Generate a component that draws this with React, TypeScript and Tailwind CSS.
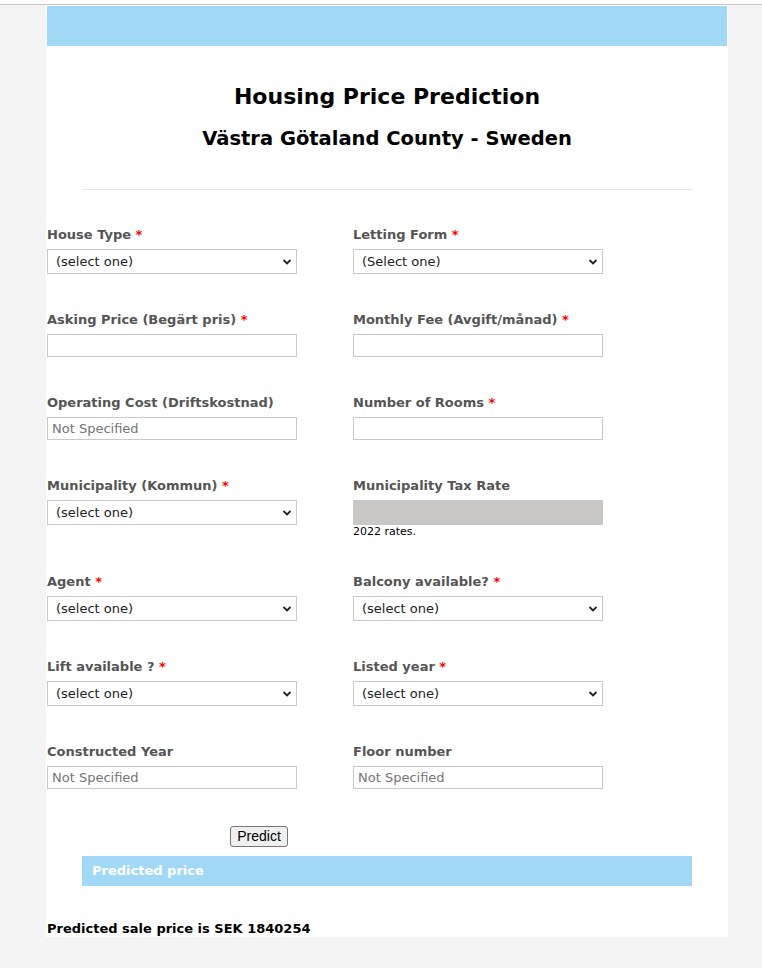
import React from "react";

const font = { fontFamily: '"DejaVu Sans", Verdana, sans-serif' };

function Label({ text, req }: { text: string; req?: boolean }) {
  return (
    <div className="h-[16px] leading-[16px] text-[13px] font-bold text-[#555555] mb-[6px] whitespace-nowrap">
      {text}
      {req && <span className="text-[#ff0000]"> *</span>}
    </div>
  );
}

function Select({ value }: { value: string }) {
  return (
    <div className="relative w-[250px] h-[25px] border border-[#c8c8c8] bg-white flex items-center pl-[8px] text-[13px] text-[#222222]">
      <span>{value}</span>
      <svg
        className="absolute right-[4px] top-[8px]"
        width="10"
        height="8"
        viewBox="0 0 10 8"
      >
        <path d="M1.5 2 L5 5.5 L8.5 2" fill="none" stroke="#222" strokeWidth="1.8" />
      </svg>
    </div>
  );
}

function Input({ placeholder }: { placeholder?: string }) {
  return (
    <div className="w-[250px] h-[23px] border border-[#c8c8c8] bg-white flex items-center pl-[4px] text-[13px] text-[#757575]">
      {placeholder ?? ""}
    </div>
  );
}

function Field({
  label,
  req,
  children,
  extra,
}: {
  label: string;
  req?: boolean;
  children: React.ReactNode;
  extra?: React.ReactNode;
}) {
  return (
    <div className="mb-[38px]">
      <Label text={label} req={req} />
      {children}
      {extra}
    </div>
  );
}

export default function App() {
  return (
    <div className="min-h-[968px] bg-[#f4f4f4]" style={font}>
      <div className="h-[5px] bg-white border-b border-[#c8c8c8]" />
      <div className="ml-[46px] w-[682px] bg-white p-px pb-0">
        <div className="h-[40px] bg-[#a0d8f5]" />
        <h1 className="mt-[38px] text-center text-[22px] leading-[26px] font-bold text-black">
          Housing Price Prediction
        </h1>
        <h2 className="mt-[17px] text-center text-[19.5px] leading-[24px] font-bold text-black">
          Västra Götaland County - Sweden
        </h2>
        <div className="mx-[35px] mt-[38px] h-px bg-[#e5e5e5]" />
        <div className="mt-[37px] grid grid-cols-[306px_306px]">
          <div>
            <Field label="House Type" req>
              <Select value="(select one)" />
            </Field>
            <Field label="Asking Price (Begärt pris)" req>
              <Input />
            </Field>
            <Field label="Operating Cost (Driftskostnad)">
              <Input placeholder="Not Specified" />
            </Field>
            <Field label="Municipality (Kommun)" req>
              <Select value="(select one)" />
              <div className="h-[11px]" />
            </Field>
            <Field label="Agent" req>
              <Select value="(select one)" />
            </Field>
            <Field label="Lift available ?" req>
              <Select value="(select one)" />
            </Field>
            <Field label="Constructed Year">
              <Input placeholder="Not Specified" />
            </Field>
          </div>
          <div>
            <Field label="Letting Form" req>
              <Select value="(Select one)" />
            </Field>
            <Field label="Monthly Fee (Avgift/månad)" req>
              <Input />
            </Field>
            <Field label="Number of Rooms" req>
              <Input />
            </Field>
            <Field
              label="Municipality Tax Rate"
              extra={
                <div className="h-[11px] leading-[13px] text-[11px] text-black whitespace-nowrap">
                  2022 rates.
                </div>
              }
            >
              <div className="w-[250px] h-[25px] bg-[#c8c7c4]" />
            </Field>
            <Field label="Balcony available?" req>
              <Select value="(select one)" />
            </Field>
            <Field label="Listed year" req>
              <Select value="(select one)" />
            </Field>
            <Field label="Floor number">
              <Input placeholder="Not Specified" />
            </Field>
          </div>
        </div>
        <div className="-mt-[3px] pl-[183px]">
          <button
            className="h-[21px] w-[58px] rounded-[3px] border border-[#767676] bg-[#efefef] text-[14px] leading-[19px] text-black"
            style={{ fontFamily: '"Liberation Sans", Arial, sans-serif' }}
          >
            Predict
          </button>
        </div>
        <div className="mt-[8px] mx-[35px] h-[30px] bg-[#a0d8f5] flex items-center pl-[10px] text-[13px] font-bold text-white">
          Predicted price
        </div>
        <div className="mt-[35px] text-[13px] leading-[16px] font-bold text-black">
          Predicted sale price is SEK 1840254
        </div>
      </div>
    </div>
  );
}
